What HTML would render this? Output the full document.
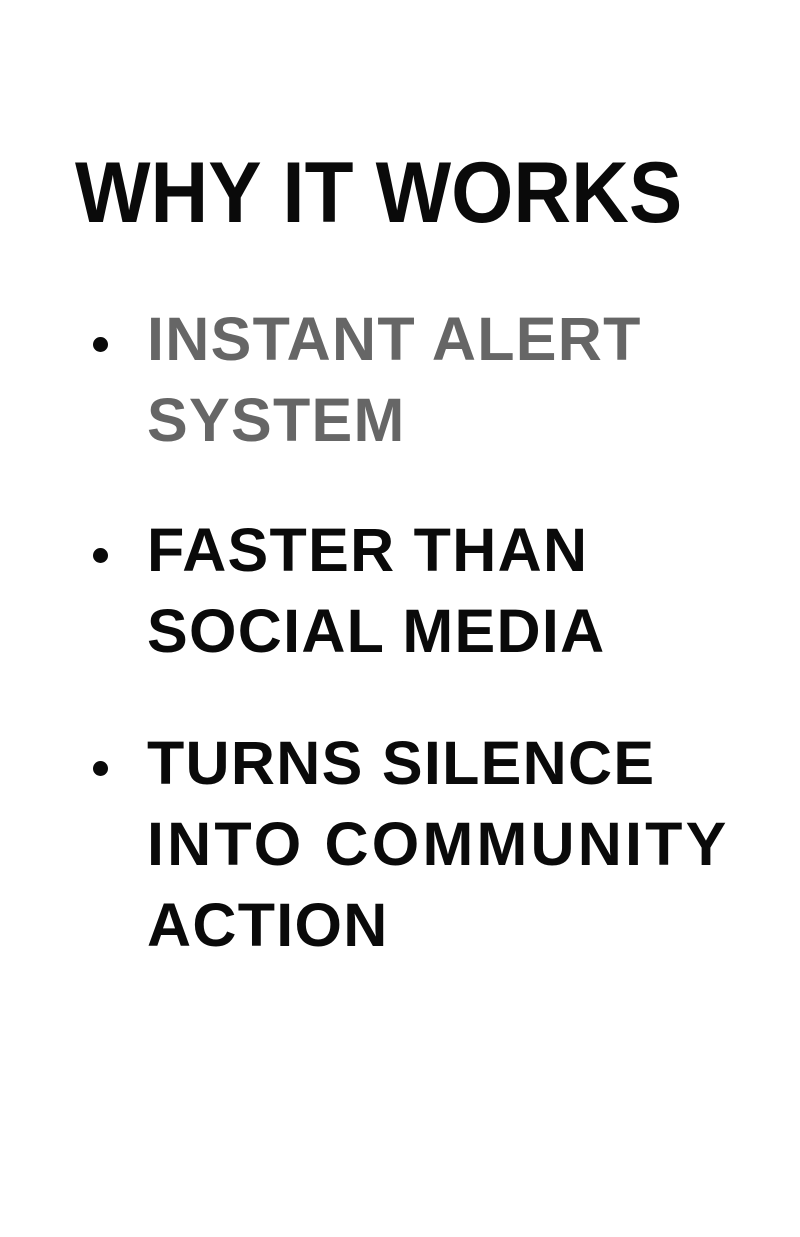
<!DOCTYPE html>
<html><head><meta charset="utf-8"><style>
html,body{margin:0;padding:0;background:#fff;width:800px;height:1237px;overflow:hidden}
body{position:relative;font-family:"Liberation Sans",sans-serif;font-weight:bold;color:#0a0a0a}
.t{position:absolute;left:75px;top:143px;font-size:86px;line-height:100px;white-space:nowrap;transform:scaleX(0.93);transform-origin:left top}
.i{position:absolute;left:147px;font-size:61px;line-height:81px;white-space:nowrap;letter-spacing:1.3px}
.d{position:absolute;left:93px;width:15px;height:15px;border-radius:50%;background:#0a0a0a}
</style></head><body>
<div class="t">WHY IT WORKS</div>
<div class="d" style="top:337px"></div>
<div class="i" style="top:299px;color:#666">INSTANT ALERT<br>SYSTEM</div>
<div class="d" style="top:548px"></div>
<div class="i" style="top:510px">FASTER THAN<br>SOCIAL MEDIA</div>
<div class="d" style="top:761px"></div>
<div class="i" style="top:723px">TURNS SILENCE<br><span style="letter-spacing:3.2px">INTO COMMUNITY</span><br>ACTION</div>
</body></html>
